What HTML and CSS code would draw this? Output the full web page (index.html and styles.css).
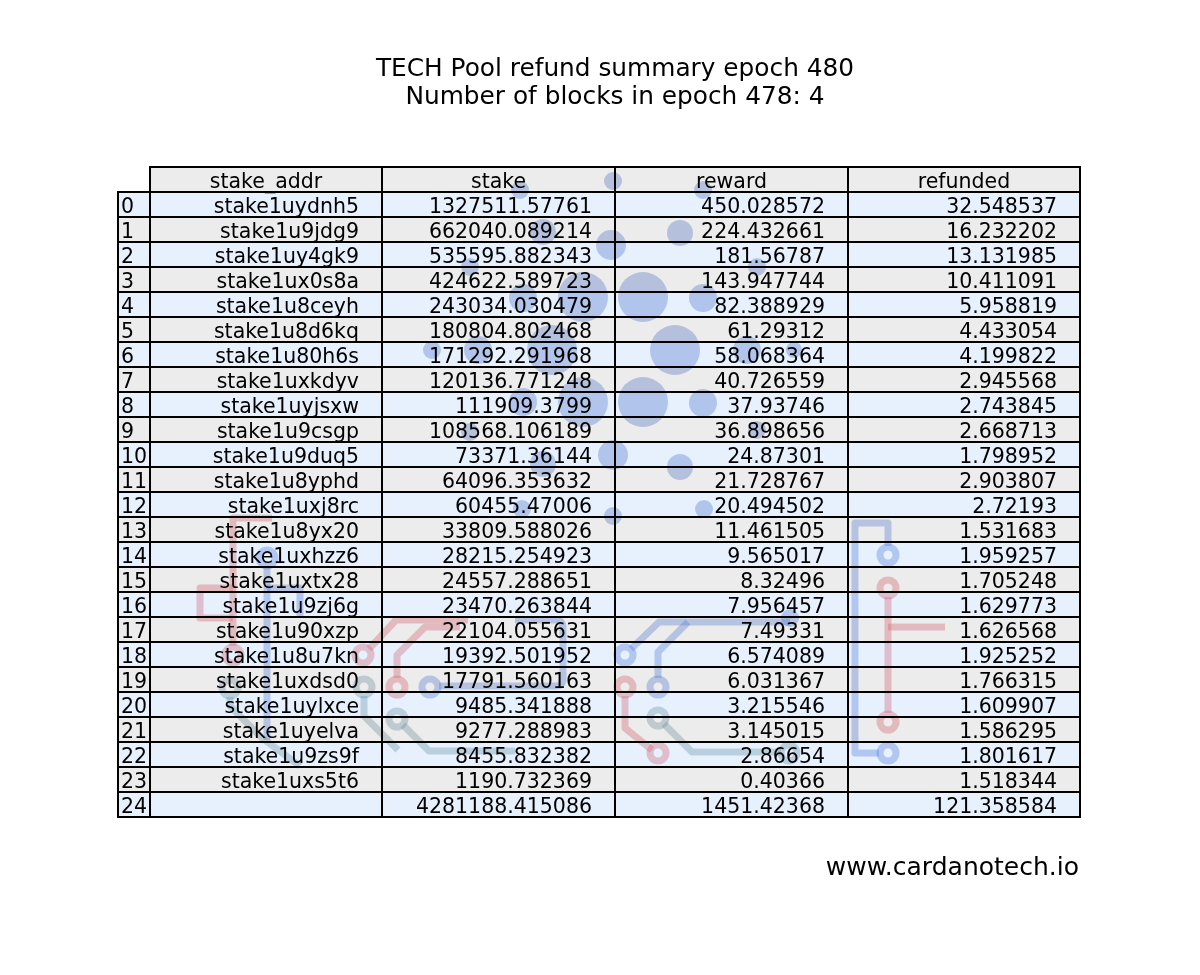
FILE: index.html
```html
<!DOCTYPE html>
<html lang="en">
<head>
<meta charset="utf-8">
<title>TECH Pool refund summary epoch 480</title>
<link rel="stylesheet" href="styles.css">
</head>
<body>
<div class="page">
  <header class="title">
    <div>TECH Pool refund summary epoch 480</div>
    <div>Number of blocks in epoch 478: 4</div>
  </header>

  <table class="summary">
    <colgroup>
      <col class="c-idx"><col class="c-addr"><col class="c-num"><col class="c-num"><col class="c-ref">
    </colgroup>
    <thead>
      <tr><th class="corner"></th><th>stake_addr</th><th>stake</th><th>reward</th><th>refunded</th></tr>
    </thead>
    <tbody>
      <tr class="b"><td class="idx">0</td><td>stake1uydnh5</td><td>1327511.57761</td><td>450.028572</td><td>32.548537</td></tr>
      <tr class="g"><td class="idx">1</td><td>stake1u9jdg9</td><td>662040.089214</td><td>224.432661</td><td>16.232202</td></tr>
      <tr class="b"><td class="idx">2</td><td>stake1uy4gk9</td><td>535595.882343</td><td>181.56787</td><td>13.131985</td></tr>
      <tr class="g"><td class="idx">3</td><td>stake1ux0s8a</td><td>424622.589723</td><td>143.947744</td><td>10.411091</td></tr>
      <tr class="b"><td class="idx">4</td><td>stake1u8ceyh</td><td>243034.030479</td><td>82.388929</td><td>5.958819</td></tr>
      <tr class="g"><td class="idx">5</td><td>stake1u8d6kq</td><td>180804.802468</td><td>61.29312</td><td>4.433054</td></tr>
      <tr class="b"><td class="idx">6</td><td>stake1u80h6s</td><td>171292.291968</td><td>58.068364</td><td>4.199822</td></tr>
      <tr class="g"><td class="idx">7</td><td>stake1uxkdyv</td><td>120136.771248</td><td>40.726559</td><td>2.945568</td></tr>
      <tr class="b"><td class="idx">8</td><td>stake1uyjsxw</td><td>111909.3799</td><td>37.93746</td><td>2.743845</td></tr>
      <tr class="g"><td class="idx">9</td><td>stake1u9csgp</td><td>108568.106189</td><td>36.898656</td><td>2.668713</td></tr>
      <tr class="b"><td class="idx">10</td><td>stake1u9duq5</td><td>73371.36144</td><td>24.87301</td><td>1.798952</td></tr>
      <tr class="g"><td class="idx">11</td><td>stake1u8yphd</td><td>64096.353632</td><td>21.728767</td><td>2.903807</td></tr>
      <tr class="b"><td class="idx">12</td><td>stake1uxj8rc</td><td>60455.47006</td><td>20.494502</td><td>2.72193</td></tr>
      <tr class="g"><td class="idx">13</td><td>stake1u8yx20</td><td>33809.588026</td><td>11.461505</td><td>1.531683</td></tr>
      <tr class="b"><td class="idx">14</td><td>stake1uxhzz6</td><td>28215.254923</td><td>9.565017</td><td>1.959257</td></tr>
      <tr class="g"><td class="idx">15</td><td>stake1uxtx28</td><td>24557.288651</td><td>8.32496</td><td>1.705248</td></tr>
      <tr class="b"><td class="idx">16</td><td>stake1u9zj6g</td><td>23470.263844</td><td>7.956457</td><td>1.629773</td></tr>
      <tr class="g"><td class="idx">17</td><td>stake1u90xzp</td><td>22104.055631</td><td>7.49331</td><td>1.626568</td></tr>
      <tr class="b"><td class="idx">18</td><td>stake1u8u7kn</td><td>19392.501952</td><td>6.574089</td><td>1.925252</td></tr>
      <tr class="g"><td class="idx">19</td><td>stake1uxdsd0</td><td>17791.560163</td><td>6.031367</td><td>1.766315</td></tr>
      <tr class="b"><td class="idx">20</td><td>stake1uylxce</td><td>9485.341888</td><td>3.215546</td><td>1.609907</td></tr>
      <tr class="g"><td class="idx">21</td><td>stake1uyelva</td><td>9277.288983</td><td>3.145015</td><td>1.586295</td></tr>
      <tr class="b"><td class="idx">22</td><td>stake1u9zs9f</td><td>8455.832382</td><td>2.86654</td><td>1.801617</td></tr>
      <tr class="g"><td class="idx">23</td><td>stake1uxs5t6</td><td>1190.732369</td><td>0.40366</td><td>1.518344</td></tr>
      <tr class="b"><td class="idx">24</td><td></td><td>4281188.415086</td><td>1451.42368</td><td>121.358584</td></tr>
    </tbody>
  </table>

  <footer class="site">www.cardanotech.io</footer>

  <svg class="watermark" viewBox="0 0 1200 975" width="1200" height="975" aria-hidden="true">
    <g class="dots">
      <circle cx="583" cy="297" r="25"/><circle cx="643" cy="297" r="25"/>
      <circle cx="675" cy="350" r="25"/><circle cx="643" cy="402" r="25"/>
      <circle cx="583" cy="402" r="25"/><circle cx="552" cy="350" r="25"/>
      <circle cx="703" cy="298" r="14"/><circle cx="703" cy="403" r="14"/>
      <circle cx="523" cy="298" r="14"/><circle cx="523" cy="402" r="14"/>
      <circle cx="747" cy="350" r="14"/><circle cx="478" cy="350" r="14"/>
      <circle cx="611" cy="245" r="15"/><circle cx="613" cy="455" r="15"/>
      <circle cx="680" cy="233" r="13"/><circle cx="680" cy="467" r="13"/>
      <circle cx="543" cy="232" r="13"/><circle cx="543" cy="464" r="13"/>
      <circle cx="613" cy="181" r="9"/><circle cx="613" cy="516" r="9"/>
      <circle cx="703" cy="190" r="9"/><circle cx="704" cy="509" r="9"/>
      <circle cx="520" cy="190" r="9"/><circle cx="522" cy="509" r="9"/>
      <circle cx="470" cy="267" r="9"/><circle cx="470" cy="432" r="9"/>
      <circle cx="432" cy="350" r="9"/><circle cx="757" cy="267" r="9"/>
      <circle cx="757" cy="430" r="9"/><circle cx="794" cy="350" r="8"/>
    </g>
    <g class="trace red">
      <path d="M272 518 H233 V646"/>
      <circle cx="233" cy="655" r="8"/>
      <path d="M233 588 H200 V618 H233"/>
      <circle cx="363" cy="655" r="8"/>
      <path d="M369 649 L396 620 H468"/>
      <circle cx="397" cy="687" r="8"/>
      <path d="M397 678 V655 L425 627 H460"/>
      <circle cx="625" cy="687" r="8"/>
      <path d="M625 696 V728 L652 750"/>
      <circle cx="658" cy="753" r="8"/>
      <circle cx="888" cy="588" r="8"/>
      <path d="M888 597 V713"/>
      <circle cx="888" cy="722" r="8"/>
      <path d="M888 627 H945"/>
    </g>
    <g class="trace blue">
      <circle cx="267" cy="558" r="8"/>
      <path d="M267 567 V740"/>
      <path d="M267 588 H300 V616"/>
      <circle cx="430" cy="687" r="8"/>
      <path d="M439 686 H556 Q563 686 563 678 V628 Q563 620 555 620 H515"/>
      <circle cx="625" cy="655" r="8"/>
      <path d="M631 649 L659 622 H790"/>
      <circle class="fill" cx="790" cy="618" r="9"/>
      <circle cx="658" cy="687" r="8"/>
      <path d="M658 678 V652 L688 622"/>
      <circle cx="888" cy="555" r="8"/>
      <path d="M888 546 V523 H855 V753 H879"/>
      <circle cx="888" cy="753" r="8"/>
    </g>
    <g class="trace grey">
      <circle cx="230" cy="688" r="8"/>
      <path d="M230 697 V706 L262 738 L300 766"/>
      <circle cx="364" cy="687" r="8"/>
      <path d="M364 696 V716 L398 750"/>
      <circle cx="397" cy="719" r="8"/>
      <path d="M403 725 L429 751 H515"/>
      <circle cx="658" cy="718" r="8"/>
      <path d="M664 724 L692 752 H781"/>
      <circle cx="789" cy="753" r="8"/>
    </g>
  </svg>
</div>
</body>
</html>
```

FILE: styles.css
```css
html, body {
  margin: 0;
  padding: 0;
  background: #ffffff;
}

.page {
  position: relative;
  width: 1200px;
  height: 975px;
  overflow: hidden;
  font-family: "DejaVu Sans", "Liberation Sans", sans-serif;
  color: #000;
}

.title {
  padding-top: 54px;
  padding-left: 30px;
  text-align: center;
  font-size: 24.8px;
  line-height: 28px;
}

.summary {
  margin-top: 56px;
  margin-left: 117px;
  width: 964px;
  table-layout: fixed;
  border-collapse: collapse;
  font-size: 20.5px;
}

.c-idx { width: 32px; }
.c-addr { width: 232px; }
.c-num { width: 233px; }
.c-ref { width: 232px; }

.summary th,
.summary td {
  border: 2px solid #000;
  padding: 5px 22px 1px 4px;
  line-height: 17px;
  text-align: right;
  white-space: nowrap;
  font-weight: normal;
}

.summary th {
  background: #ececec;
  text-align: center;
  padding-left: 0;
  padding-right: 0;
}

.summary th.corner {
  background: transparent;
  border-top: none;
  border-left: none;
}

.summary td.idx {
  text-align: left;
  padding-left: 2px;
  padding-right: 0;
}

.summary tr.b td { background: #e7f1fd; }
.summary tr.g td { background: #ececec; }

.site {
  margin-top: 35px;
  padding-right: 121px;
  text-align: right;
  font-size: 25px;
  line-height: 28px;
}

.watermark {
  position: absolute;
  left: 0;
  top: 0;
  pointer-events: none;
  mix-blend-mode: multiply;
}

.dots circle {
  fill: #5c7fcf;
  fill-opacity: 0.36;
}

.trace {
  fill: none;
  stroke-width: 7;
  stroke-linejoin: round;
}

.trace.red { stroke: #e67884; stroke-opacity: 0.4; }
.trace.blue { stroke: #648ce0; stroke-opacity: 0.38; }
.trace.grey { stroke: #6e96a0; stroke-opacity: 0.34; }

.trace circle.fill {
  fill: #648ce0;
  fill-opacity: 0.38;
  stroke: none;
}
```
